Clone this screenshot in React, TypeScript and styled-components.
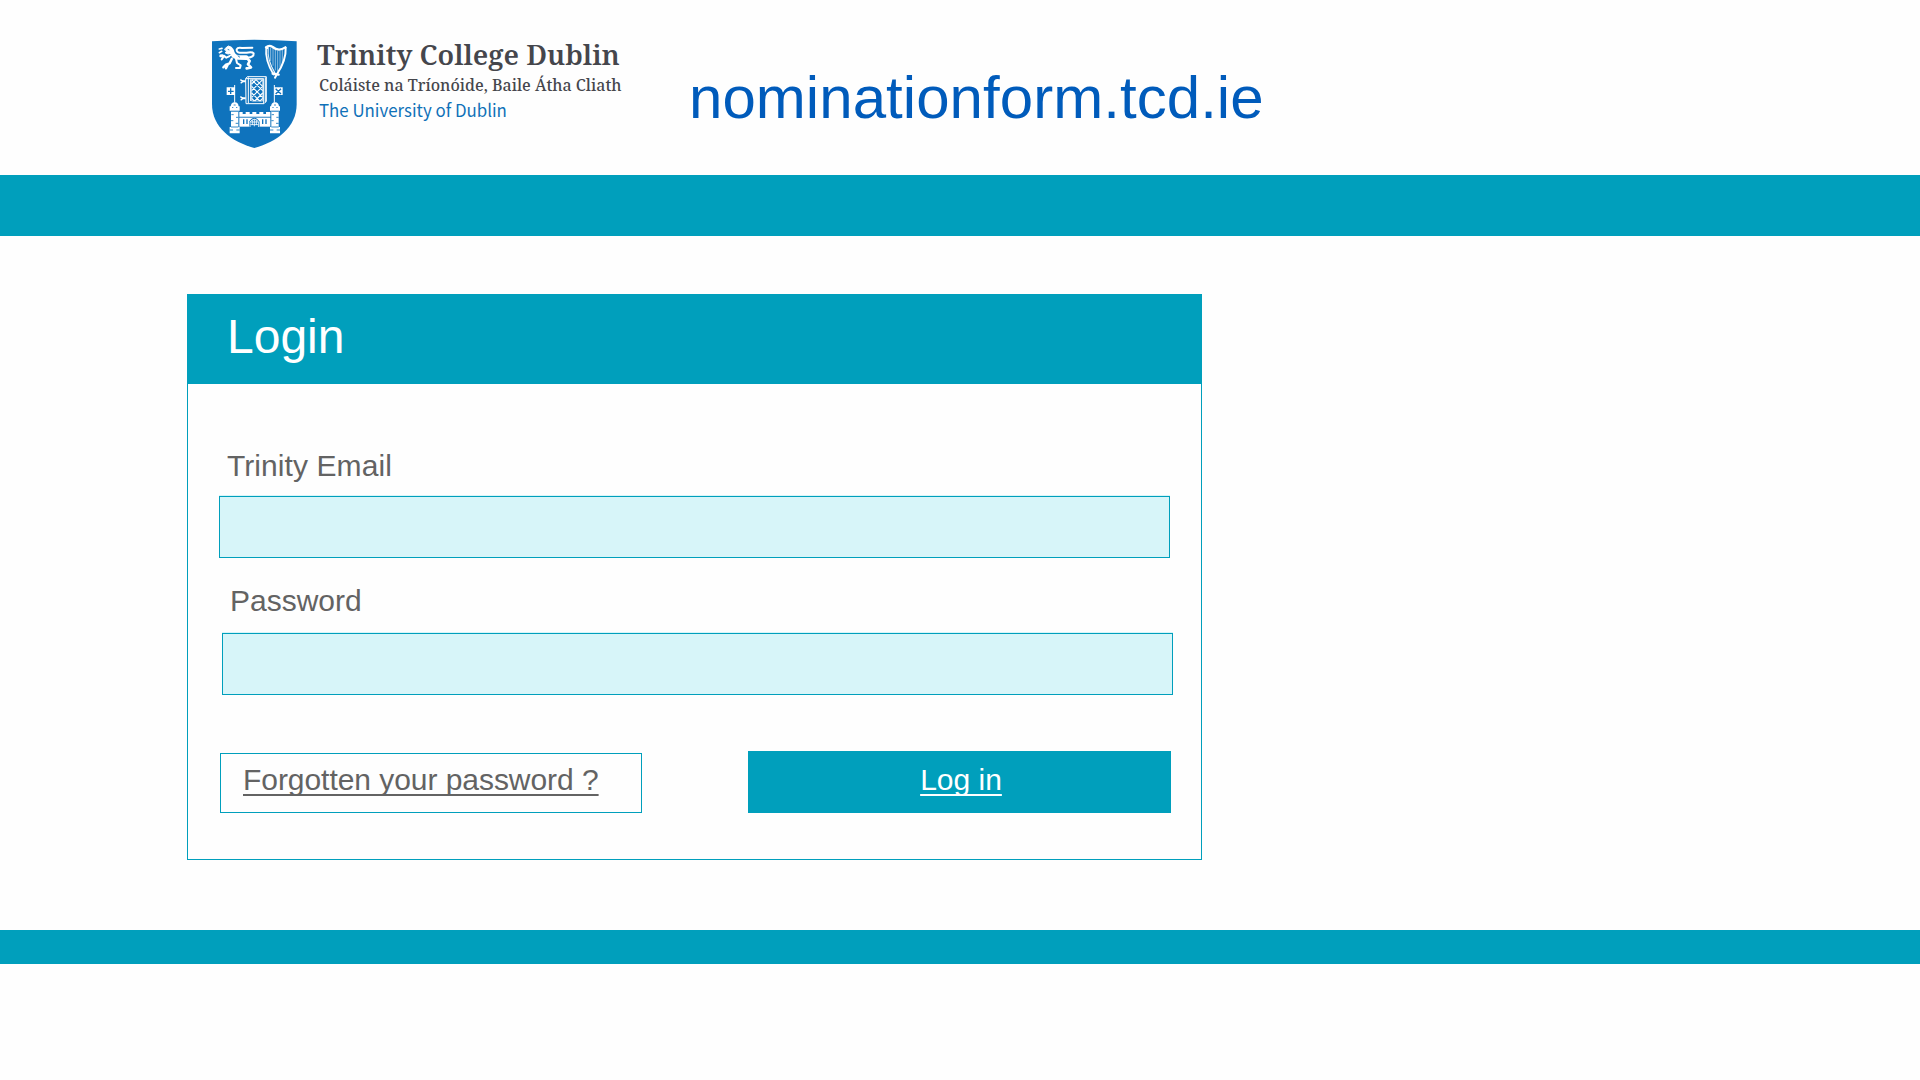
import React from "react";
import styled, { createGlobalStyle } from "styled-components";

const teal = "#009fbc";
const sans = `"Liberation Sans", Arial, sans-serif`;

const GlobalStyle = createGlobalStyle`
  *, *::before, *::after { box-sizing: border-box; }
  body { margin: 0; background: #fefefe; font-family: ${sans}; }
`;

const Page = styled.div`
  min-height: 1080px;
  display: flex;
  flex-direction: column;
  background: #fefefe;
`;

const Header = styled.header`
  height: 175px;
  display: flex;
  align-items: flex-start;
  padding-left: 211px;
`;

const Crest = styled.svg`
  width: 87px;
  height: 110px;
  margin-top: 39px;
  flex: none;
`;

const Wordmark = styled.div`
  width: 391px;
  padding: 36px 0 0 19px;
  display: flex;
  flex-direction: column;
  align-items: flex-start;
`;

const Brand = styled.span<{ $size: number; $line: number; $weight?: number; $stretch?: number; $indent?: number }>`
  font-family: "Noto Serif", "DejaVu Serif Condensed", "DejaVu Serif", serif;
  font-size: ${(p) => p.$size}px;
  line-height: ${(p) => p.$line}px;
  font-weight: ${(p) => p.$weight ?? 400};
  margin-left: ${(p) => p.$indent ?? 0}px;
  color: #45464c;
  white-space: nowrap;
  transform: scaleX(${(p) => p.$stretch ?? 1});
  transform-origin: left;
`;

const Tagline = styled(Brand)`
  font-family: "Noto Sans CJK SC", "Open Sans", sans-serif;
  color: #0f71b8;
`;

const Site = styled.h1`
  margin: 63px 0 0;
  font-size: 60px;
  line-height: 69px;
  letter-spacing: 0.05px;
  font-weight: 400;
  color: #005bbb;
`;

const Band = styled.div<{ $height: number }>`
  height: ${(p) => p.$height}px;
  background: ${teal};
`;

const Main = styled.main`
  height: 694px;
  padding: 58px 0 0 187px;
`;

const Card = styled.section`
  width: 1015px;
  height: 566px;
  border: 1px solid ${teal};
  display: flex;
  flex-direction: column;
`;

const CardTitle = styled.h2`
  margin: 0;
  height: 89px;
  padding: 14px 0 0 39px;
  background: ${teal};
  color: #fff;
  font-size: 48px;
  line-height: 55px;
  font-weight: 400;
`;

const Form = styled.form`
  display: flex;
  flex-direction: column;
  gap: 26px;
  padding: 65px 0 0 31px;
`;

const Field = styled.label<{ $indent?: number; $height: number }>`
  display: flex;
  flex-direction: column;
  justify-content: space-between;
  height: ${(p) => p.$height}px;
  width: 951px;
  margin-left: ${(p) => p.$indent ?? 0}px;
  color: #636363;
  font-size: 30px;
  line-height: 34px;
`;

const Caption = styled.span<{ $tracking?: number }>`
  padding-left: 8px;
  letter-spacing: ${(p) => p.$tracking ?? 0}px;
`;

const Input = styled.input`
  width: 100%;
  height: 62px;
  padding: 0 16px;
  border: 1px solid ${teal};
  border-radius: 0;
  background: #d7f5f9;
  box-shadow: 0 -1px #d7f5f9;
  font: inherit;
  color: inherit;
  outline: none;
`;

const Actions = styled.div`
  display: flex;
  align-items: flex-end;
  justify-content: space-between;
  width: 951px;
  margin: 30px 0 0 1px;
`;

const Action = styled.a<{ $primary?: boolean }>`
  display: flex;
  align-items: flex-start;
  justify-content: ${(p) => (p.$primary ? "center" : "flex-start")};
  width: ${(p) => (p.$primary ? 423 : 422)}px;
  height: ${(p) => (p.$primary ? 62 : 60)}px;
  padding: ${(p) => (p.$primary ? "11px 0 0 3px" : "9px 0 0 22px")};
  border: 1px solid ${teal};
  background: ${(p) => (p.$primary ? teal : "transparent")};
  color: ${(p) => (p.$primary ? "#fff" : "#636363")};
  font-size: 30px;
  line-height: 34px;
  letter-spacing: ${(p) => (p.$primary ? 0 : -0.05)}px;
  text-decoration: underline;
  text-decoration-thickness: 1.5px;
  text-underline-offset: 4px;
  text-decoration-skip-ink: none;
`;

const blue = "#0f73bd";

function Tower({ x }: { x: number }) {
  return (
    <g transform={`translate(${x} 0)`}>
      <path d="M-12 232Q-12 217 0 217Q12 217 12 232Z" />
      <path d="M-15 229h7v5h4v-5h8v5h4v-5h7v13h-30Z" />
      <path d="M-11 242H11V291H15V310H-15V291H-11Z" />
      <path
        d="M-11 244H11M-10 254H-3M4 262H11M-11 272H-4M3 280H11M-11 291H11M-15 300H-5M5 300H15M-3 225h6"
        stroke={blue}
        strokeWidth="2.5"
      />
    </g>
  );
}

function Shield() {
  return (
    <Crest viewBox="33 27 261 330" aria-label="Trinity College Dublin crest">
      <path d="M36 34Q163 24 290 34V222C290 292 232 335 163 354C94 335 36 292 36 222Z" fill={blue} />

      {/* lion passant */}
      <g fill="none" stroke="#fff" strokeLinecap="round" strokeLinejoin="round">
        <path d="M77 54L85 48L95 52L99 62L94 70L84 72L75 68L82 63L75 60Z" fill="#fff" strokeWidth="3" />
        <path d="M95 62Q99 80 114 82L139 83" strokeWidth="14" />
        <path d="M92 77L79 83L71 77L61 79M71 80L65 88" strokeWidth="6" />
        <path d="M97 83L89 100L78 104L70 112M83 105L78 115" strokeWidth="7" />
        <path d="M108 86L111 99L122 106L120 114L108 114" strokeWidth="6" />
        <path d="M139 83L149 93L144 103L153 112L140 115" strokeWidth="8" />
        <path d="M143 83Q162 82 161 70Q157 65 140 68L119 68Q109 67 110 58Q113 51 126 54L157 53" strokeWidth="6" />
        <path d="M58 57L66 55M58 68L65 64M61 76L67 75" strokeWidth="5" />
      </g>
      <path d="M83 58l5 2M90 79l8 5M113 77l7 5" stroke={blue} strokeWidth="2.5" />

      {/* harp */}
      <g fill="none" stroke="#fff" strokeLinecap="round" strokeLinejoin="round">
        <path d="M201 53Q197 90 222 131" strokeWidth="10" />
        <path d="M198 52Q207 44 218 51Q236 66 256 52" strokeWidth="7" />
        <path d="M257 53Q259 91 231 132L225 143" strokeWidth="6" />
        <path d="M218 131L236 134" strokeWidth="7" />
        <path
          d="M212 54V92M219 55V106M226 61V120M233 63V123M240 63V111M247 61V98"
          strokeWidth="1.6"
        />
      </g>
      <path d="M202 57Q200 91 221 127" fill="none" stroke={blue} strokeWidth="2" />

      {/* clasped book */}
      <g fill="none" stroke="#fff" strokeWidth="3">
        <path d="M137 146L142 140H199V214L192 221H138Z" />
        <path d="M145 142V219M152 148V213M137 146H191V220M196 142V217" />
        <path d="M155 149H188V213H155Z" strokeWidth="2" />
        <path
          d="M155 162L168 149L188 169M155 149L188 182M155 169L188 202M155 189L179 213M155 205L163 213M188 149L155 182M188 169L155 202M188 189L164 213M188 205L180 213"
          strokeWidth="3.2"
        />
        <path d="M137 154H126M137 205H126" strokeWidth="6" />
        <path d="M121 149l8 5l-7 6M121 200l8 5l-7 6" strokeWidth="4" />
      </g>

      {/* castle */}
      <g fill="#fff">
        <path d="M118 246H128V252H137V246H149V252H157V246H169V252H178V246H190V252H198V246H211V260H118Z" />
        <path d="M118 263H211V290H118Z" />
        <Tower x={104} />
        <Tower x={225} />
      </g>
      <path d="M131 268V282M141 268V282M188 268V282M198 268V282" stroke={blue} strokeWidth="4" />
      <path d="M147 292V275Q163 252 179 275V292Z" fill={blue} />
      <path
        d="M150 291V276Q163 259 176 276V291M157 270V285M163 267V289M169 270V285M151 276H175M151 284H175"
        fill="none"
        stroke="#fff"
        strokeWidth="2.5"
      />

      {/* flags */}
      <path d="M104 218V165M223 218V165" stroke="#fff" strokeWidth="3" />
      <path d="M80 172H105V195H80ZM223 172H248V195H223Z" fill="#fff" />
      <path d="M92 175V192M84 184H101M227 176L243 192M243 176L227 192" stroke={blue} strokeWidth="4" />
    </Crest>
  );
}

export default function App() {
  return (
    <Page>
      <GlobalStyle />
      <Header>
        <Shield />
        <Wordmark>
          <Brand $size={28} $line={36} $weight={600} $stretch={0.99}>Trinity College Dublin</Brand>
          <Brand $size={17} $line={25} $weight={500} $stretch={0.939} $indent={2}>Coláiste na Tríonóide, Baile Átha Cliath</Brand>
          <Tagline $size={17.5} $line={26} $stretch={0.963} $indent={2}>The University of Dublin</Tagline>
        </Wordmark>
        <Site>nominationform.tcd.ie</Site>
      </Header>
      <Band $height={61} />
      <Main>
        <Card>
          <CardTitle>Login</CardTitle>
          <Form>
            <Field $height={109}>
              <Caption $tracking={0.08}>Trinity Email</Caption>
              <Input type="email" />
            </Field>
            <Field $height={111} $indent={3}>
              <Caption>Password</Caption>
              <Input type="password" />
            </Field>
            <Actions>
              <Action>Forgotten your password ?</Action>
              <Action $primary>Log in</Action>
            </Actions>
          </Form>
        </Card>
      </Main>
      <Band $height={34} />
    </Page>
  );
}
